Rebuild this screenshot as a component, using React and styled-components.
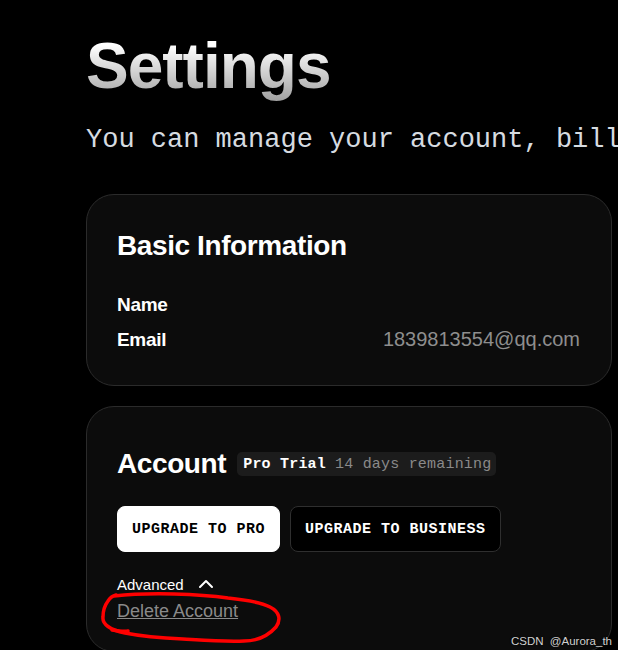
import styled, { createGlobalStyle } from "styled-components";
import { ChevronUp } from "lucide-react";

const GlobalStyle = createGlobalStyle`
html, body {
margin: 0;
padding: 0;
background-color: #000;
overflow: hidden;
}
* {
box-sizing: border-box;
}
`

export default function App() {
    return (
        <>
            <GlobalStyle />
            <Page>
                <Title>Settings</Title>
                <Subtitle>You can manage your account, billing, and team settings here.</Subtitle>
                <Card>
                    <CardTitle>Basic Information</CardTitle>
                    <InfoRow>
                        <Label>Name</Label>
                    </InfoRow>
                    <InfoRow>
                        <Label>Email</Label>
                        <Value>1839813554@qq.com</Value>
                    </InfoRow>
                </Card>
                <Card>
                    <AccountHeader>
                        <CardTitle>Account</CardTitle>
                        <Badge>
                            <Plan>Pro Trial</Plan>
                            <Remaining>14 days remaining</Remaining>
                        </Badge>
                    </AccountHeader>
                    <Buttons>
                        <Button primary>Upgrade to Pro</Button>
                        <Button>Upgrade to Business</Button>
                    </Buttons>
                    <Advanced>
                        Advanced
                        <ChevronUp size={24} strokeWidth={2} />
                    </Advanced>
                    <DeleteLink href="#">Delete Account</DeleteLink>
                </Card>
            </Page>
            <Annotation width="618" height="650" viewBox="0 0 618 650">
                <path d="M114 596 C150 592 200 594 228 598 C248 600 262 603 270 607 C280 612 281 620 276 627 C268 636 256 641 244 641 C225 642 200 640 183 639 C160 638 140 636 125 633 C110 630 102 624 103 617 C103 610 105 605 108 601 C110 598 112 596 116 595" />
                <path d="M112 630 C118 631 124 632 128 631" />
            </Annotation>
            <Watermark>CSDN @Aurora_th</Watermark>
        </>
    )
}

const Page = styled.div`
padding: 31px 0 0 86px;
width: 618px;
height: 650px;
overflow: hidden;
`
const Title = styled.h1`
margin: 0;
font-family: 'Liberation Sans', Arial, sans-serif;
font-weight: 700;
font-size: 64px;
line-height: 1.1;
letter-spacing: -1px;
background: linear-gradient(180deg, #ffffff 20%, #a0a0a0 100%);
-webkit-background-clip: text;
background-clip: text;
color: transparent;
display: inline-block;
`
const Subtitle = styled.p`
margin: 22px 0 0 0;
font-family: 'Liberation Mono', 'DejaVu Sans Mono', monospace;
font-size: 27px;
line-height: 1.3;
color: #d6dbe0;
white-space: nowrap;
`
const Card = styled.div`
width: 526px;
margin-top: 36px;
background-color: #0c0c0c;
border: 1px solid #2b2b2b;
border-radius: 28px;
padding: 34px 31px 28px 30px;
& + & {
margin-top: 20px;
}
`
const CardTitle = styled.h2`
margin: 0;
font-family: 'Liberation Sans', Arial, sans-serif;
font-weight: 700;
font-size: 28px;
line-height: 34px;
letter-spacing: -0.4px;
color: #fff;
`
const InfoRow = styled.div`
display: flex;
justify-content: space-between;
align-items: baseline;
height: 35px;
line-height: 35px;
&:first-of-type {
margin-top: 24px;
}
`
const Label = styled.span`
font-family: 'Liberation Sans', Arial, sans-serif;
font-weight: 700;
font-size: 19px;
letter-spacing: -0.3px;
color: #fff;
`
const Value = styled.span`
font-family: 'Liberation Sans', Arial, sans-serif;
font-size: 20px;
color: #8e8e8e;
`
const AccountHeader = styled.div`
display: flex;
align-items: center;
gap: 11px;
height: 46px;
`
const Badge = styled.div`
display: flex;
align-items: center;
gap: 9px;
height: 24px;
padding: 0 5px 0 6px;
background-color: #1c1c1c;
border-radius: 5px;
font-family: 'Liberation Mono', 'DejaVu Sans Mono', monospace;
font-size: 15px;
letter-spacing: 0.2px;
`
const Plan = styled.span`
font-weight: 700;
color: #fff;
`
const Remaining = styled.span`
color: #8a8a8a;
`
const Buttons = styled.div`
display: flex;
gap: 10px;
margin-top: 19px;
`
const Button = styled.button`
height: 46px;
padding: 0 14px;
border-radius: 8px;
border: 1px solid ${props => props.primary ? "#fff" : "#2f2f2f"};
background-color: ${props => props.primary ? "#fff" : "#000"};
color: ${props => props.primary ? "#000" : "#fff"};
font-family: 'Liberation Mono', 'DejaVu Sans Mono', monospace;
font-weight: 700;
font-size: 15px;
letter-spacing: 0.5px;
text-transform: uppercase;
cursor: pointer;
`
const Advanced = styled.div`
display: flex;
align-items: center;
gap: 10px;
margin-top: 22px;
height: 20px;
font-family: 'Liberation Sans', Arial, sans-serif;
font-size: 15px;
color: #fff;
`
const DeleteLink = styled.a`
display: inline-block;
margin-top: 5px;
font-family: 'Liberation Sans', Arial, sans-serif;
font-size: 18px;
line-height: 24px;
color: #8a8a8a;
text-decoration: underline;
`
const Annotation = styled.svg`
position: absolute;
top: 0;
left: 0;
pointer-events: none;
fill: none;
stroke: #ff0000;
stroke-width: 3.5;
stroke-linecap: round;
`
const Watermark = styled.div`
position: absolute;
right: 6px;
bottom: 3px;
font-family: 'Liberation Sans', Arial, sans-serif;
font-size: 11.5px;
word-spacing: 3px;
color: #d0d0d0;
text-shadow: 0 0 2px #000;
`
